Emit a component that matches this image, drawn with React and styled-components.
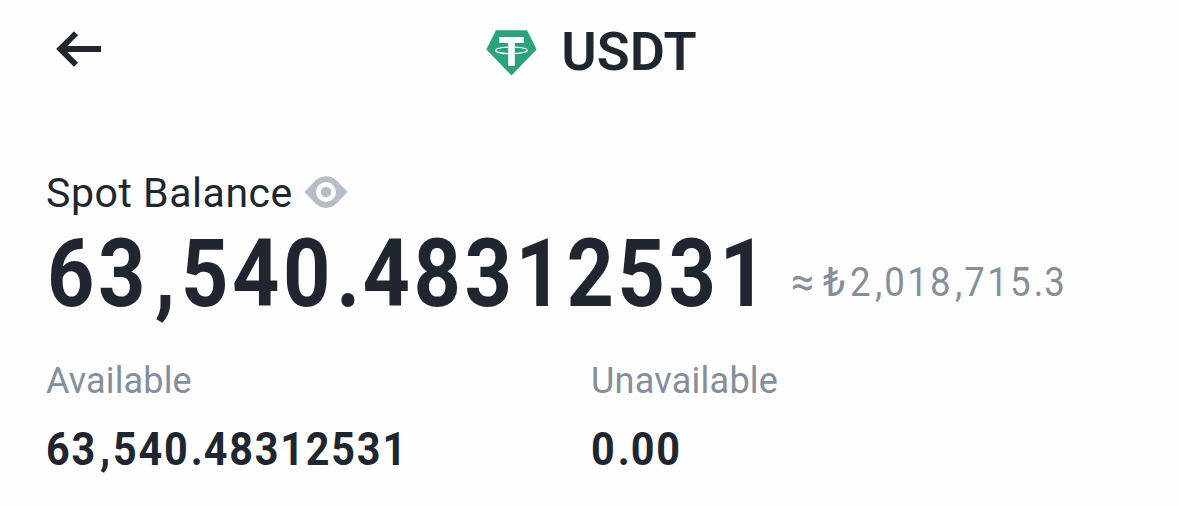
import React from 'react';
import styled, { createGlobalStyle } from 'styled-components';

const GlobalStyle = createGlobalStyle`
  * {
    box-sizing: border-box;
  }

  body {
    margin: 0;
    background: #fefefe;
    color: #1f2630;
    font-family: Roboto, "Liberation Sans", sans-serif;
  }
`;

function BackArrow() {
  return (
    <svg width="46" height="36" viewBox="0 0 46 36" fill="none" stroke="#1f2630" strokeWidth="5.8">
      <path d="M4 18H46M21 2.2L5.2 18L21 33.8" />
    </svg>
  );
}

function TetherLogo() {
  return (
    <svg width="51" height="46" viewBox="0 0 51 46">
      <path d="M10 0.3H41L50.6 19.5L25.5 45.5L0.4 19.5Z" fill="#2aa37c" />
      <path d="M13.3 7H38V13H28.8V36H22.2V13H13.3Z" fill="#fefefe" />
      <path
        d="M22.2 17.2C15 17.5 9.8 18.6 9.8 20.4C9.8 22.2 16.8 23.7 25.5 23.7S41.2 22.2 41.2 20.4C41.2 18.6 36.2 17.5 28.8 17.2"
        fill="none"
        stroke="#fefefe"
        strokeWidth="1.3"
      />
    </svg>
  );
}

function EyeIcon() {
  return (
    <svg width="44" height="32" viewBox="0 0 44 32">
      <path
        d="M0.4 16L11.5 4.4C17.3 -1.3 26.7 -1.3 32.5 4.4L43.6 16L32.5 27.6C26.7 33.3 17.3 33.3 11.5 27.6Z"
        fill="#b7bdc7"
      />
      <circle cx="22" cy="16" r="10" fill="#fefefe" />
      <circle cx="22" cy="16" r="5.2" fill="#b7bdc7" />
    </svg>
  );
}

// Separators get a fixed advance so the digits keep an even rhythm
function Digits({ value }) {
  return value.split(/([.,])/).map((part, i) => {
    if (part === ',') return <Comma key={i}>,</Comma>;
    if (part === '.') return <Point key={i}>.</Point>;
    return part;
  });
}

export default function App() {
  return (
    <React.Fragment>
      <GlobalStyle />
      <Header>
        <BackButton aria-label="Back">
          <BackArrow />
        </BackButton>
        <Coin>
          <TetherLogo />
          <CoinName>USDT</CoinName>
        </Coin>
      </Header>
      <Balance>
        <BalanceLabel>
          <LabelText>Spot Balance</LabelText>
          <EyeIcon />
        </BalanceLabel>
        <BalanceRow>
          <Total>
            <Digits value="63,540.48312531" />
          </Total>
          <Approx>≈</Approx>
          <Lira>₺</Lira>
          <Fiat>
            <Digits value="2,018,715.3" />
          </Fiat>
        </BalanceRow>
        <Details>
          <Detail>
            <DetailLabel $spacing="0.15px">Available</DetailLabel>
            <DetailValue>
              <Digits value="63,540.48312531" />
            </DetailValue>
          </Detail>
          <Detail>
            <DetailLabel $spacing="0.25px">Unavailable</DetailLabel>
            <DetailValue>
              <Digits value="0.00" />
            </DetailValue>
          </Detail>
        </Details>
      </Balance>
    </React.Fragment>
  );
}

const Header = styled.header`
  display: grid;
  grid-template-columns: 1fr auto 1fr;
  align-items: center;
  height: 105px;
  padding: 0 51px 0 55px;
`;

const BackButton = styled.button`
  display: flex;
  justify-self: start;
  margin-bottom: 7px;
  padding: 0;
  border: 0;
  background: none;
`;

const Coin = styled.div`
  display: flex;
  align-items: center;
  gap: 24px;
`;

const CoinName = styled.h1`
  margin: 0 0 2px;
  font-size: 54px;
  font-weight: 600;
  line-height: 60px;
`;

const Balance = styled.main`
  padding: 63px 46px 0;
`;

const BalanceLabel = styled.div`
  display: flex;
  align-items: center;
  gap: 11px;
  height: 48px;
`;

const LabelText = styled.span`
  width: 247px;
  padding-top: 2px;
  font-size: 41px;
  line-height: 48px;
  letter-spacing: 0.55px;
  white-space: nowrap;
`;

const BalanceRow = styled.div`
  display: flex;
  align-items: flex-start;
  height: 80px;
  margin-top: 18px;
`;

const Comma = styled.span`
  display: inline-block;
  width: 0.387em;
  letter-spacing: 0;
  text-align: center;
`;

const Point = styled(Comma)`
  width: 0.345em;
`;

const Amount = styled.div`
  white-space: nowrap;
  transform: scaleX(0.88);
  transform-origin: 0 50%;
  letter-spacing: 0.045em;
`;

const Total = styled(Amount)`
  width: 745px;
  padding-left: 1px;
  font-size: 94px;
  font-weight: 700;
  line-height: 80px;
  letter-spacing: 0.043em;
`;

const Approx = styled.span`
  width: 32px;
  margin-top: 24px;
  color: #848e9c;
  font-size: 41px;
  line-height: 48px;
`;

const Lira = styled(Approx)`
  width: 27px;
`;

const Fiat = styled(Amount)`
  margin-top: 24px;
  color: #848e9c;
  font-size: 41.5px;
  line-height: 48px;
  letter-spacing: 0.063em;

  ${Comma} {
    width: 0.315em;
  }
`;

const Details = styled.div`
  display: grid;
  grid-template-columns: 545px 1fr;
  margin-top: 46px;
`;

const Detail = styled.div`
  display: flex;
  flex-direction: column;
  gap: 19px;
`;

const DetailLabel = styled.span`
  color: #848e9c;
  font-size: 36px;
  line-height: 42px;
  letter-spacing: ${(props) => props.$spacing};
`;

const DetailValue = styled(Amount)`
  font-size: 47px;
  font-weight: 700;
  line-height: 56px;
  letter-spacing: 0.043em;
`;
